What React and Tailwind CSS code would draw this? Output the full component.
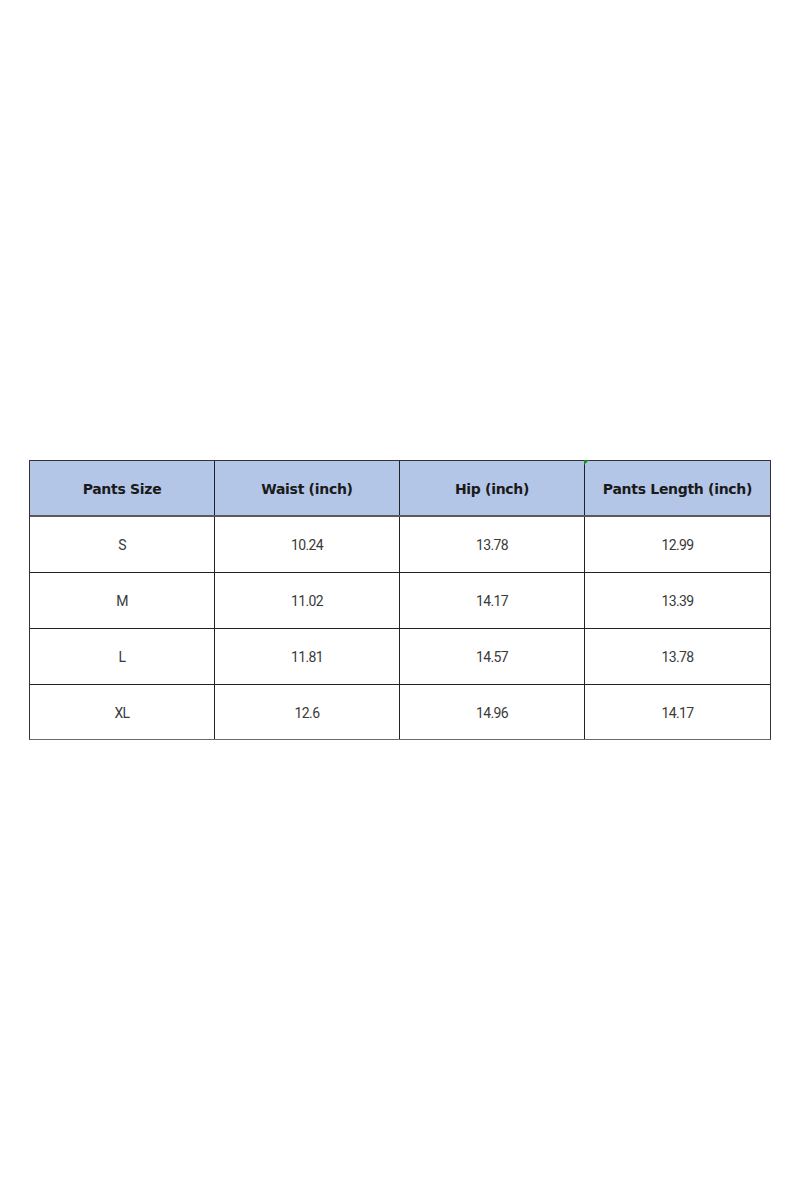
import React from 'react';

const rows = [
  ['S', '10.24', '13.78', '12.99'],
  ['M', '11.02', '14.17', '13.39'],
  ['L', '11.81', '14.57', '13.78'],
  ['XL', '12.6', '14.96', '14.17'],
];

const headers = ['Pants Size', 'Waist (inch)', 'Hip (inch)', 'Pants Length (inch)'];

export default function App() {
  return (
    <div className="min-h-[1200px] w-[800px] bg-white flex items-center justify-center">
      <div className="w-[742px] border border-[#333] border-b-[#6a6a6a]">
        {/* Header */}
        <div className="grid grid-cols-4 bg-[#b4c6e7] border-b-2 border-[#5a5a5a] h-[56px]">
          {headers.map((h, i) => (
            <div
              key={h}
              className={`relative flex items-center justify-center pt-[2px] text-[14px] font-bold text-[#1a1a1a] font-['DejaVu_Sans',sans-serif] tracking-[-0.3px] ${
                i < 3 ? 'border-r border-[#222]' : ''
              }`}
            >
              {i === 3 && (
                <span className="absolute -left-px -top-px w-0 h-0 border-t-[5px] border-r-[5px] border-t-[#1f8a1f] border-r-transparent" />
              )}
              {h}
            </div>
          ))}
        </div>

        {/* Rows */}
        {rows.map((r, ri) => (
          <div
            key={r[0]}
            className={`grid grid-cols-4 ${ri < rows.length - 1 ? 'h-[56px] border-b border-[#222]' : 'h-[54px]'}`}
          >
            {r.map((c, ci) => (
              <div
                key={ci}
                className={`flex items-center justify-center pt-[2px] text-[14px] text-[#3a3a3a] font-['Roboto',sans-serif] tracking-[-0.6px] ${
                  ci < 3 ? 'border-r border-[#222]' : ''
                }`}
              >
                {c}
              </div>
            ))}
          </div>
        ))}
      </div>
    </div>
  );
}
